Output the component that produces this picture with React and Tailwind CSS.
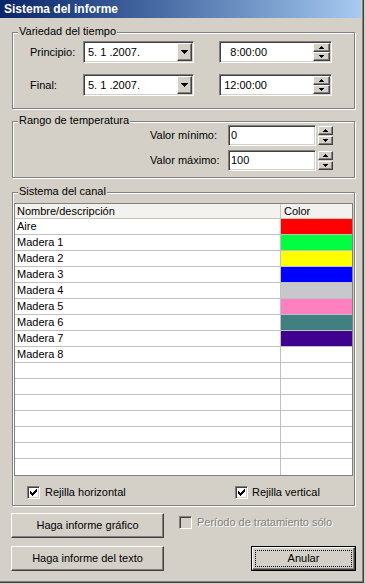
import React from 'react';

const raised =
  'border border-t-white border-l-white border-r-[#404040] border-b-[#404040] shadow-[inset_-1px_-1px_0_#808080,inset_1px_1px_0_#d4d0c8]';
const sunken =
  'border border-t-[#808080] border-l-[#808080] border-r-white border-b-white shadow-[inset_1px_1px_0_#404040,inset_-1px_-1px_0_#d4d0c8]';

const ArrowDown = () => (
  <svg width="7" height="4" shapeRendering="crispEdges">
    <rect x="0" y="0" width="7" height="1" fill="#000" />
    <rect x="1" y="1" width="5" height="1" fill="#000" />
    <rect x="2" y="2" width="3" height="1" fill="#000" />
    <rect x="3" y="3" width="1" height="1" fill="#000" />
  </svg>
);

const SmallArrow = ({ up }) => (
  <svg width="5" height="3" shapeRendering="crispEdges" className={up ? '' : 'rotate-180'}>
    <rect x="2" y="0" width="1" height="1" fill="#000" />
    <rect x="1" y="1" width="3" height="1" fill="#000" />
    <rect x="0" y="2" width="5" height="1" fill="#000" />
  </svg>
);

const Check = () => (
  <svg width="7" height="7" shapeRendering="crispEdges">
    <rect x="6" y="0" width="1" height="3" fill="#000" />
    <rect x="5" y="1" width="1" height="3" fill="#000" />
    <rect x="4" y="2" width="1" height="3" fill="#000" />
    <rect x="3" y="3" width="1" height="3" fill="#000" />
    <rect x="2" y="4" width="1" height="3" fill="#000" />
    <rect x="1" y="3" width="1" height="3" fill="#000" />
    <rect x="0" y="2" width="1" height="3" fill="#000" />
  </svg>
);

const Spinner = ({ className = '' }) => (
  <div className={`flex flex-col ${className}`}>
    <div className={`${raised} bg-[#d4d0c8] flex-1 flex items-center justify-center`}>
      <SmallArrow up />
    </div>
    <div className={`${raised} bg-[#d4d0c8] flex-1 flex items-center justify-center`}>
      <SmallArrow />
    </div>
  </div>
);

const Group = ({ title, className = '', children }) => (
  <div className={`relative ml-[12px] w-[343px] border border-[#808080] shadow-[1px_1px_0_#fff,inset_1px_1px_0_#fff] ${className}`}>
    <span className="absolute left-[5px] top-[-8px] bg-[#d4d0c8] px-px leading-[13px]">{title}</span>
    {children}
  </div>
);

const CheckBox = ({ checked, disabled }) => (
  <div className={`${sunken} w-[13px] h-[13px] flex items-center justify-center ${disabled ? 'bg-[#d4d0c8]' : 'bg-white'}`}>
    {checked && <Check />}
  </div>
);

const Button = ({ children }) => (
  <div className={`${raised} w-[153px] h-[25px] bg-[#d4d0c8] flex items-center justify-center`}>{children}</div>
);

const DateRow = ({ label, date, time }) => (
  <div className="flex items-center">
    <span className="w-[53px]">{label}</span>
    <div className={`${sunken} bg-white w-[111px] h-[22px] p-px flex items-center`}>
      <span className="flex-1 pl-[3px]">{date}</span>
      <div className={`${raised} bg-[#d4d0c8] w-[15px] h-full flex items-center justify-center`}>
        <ArrowDown />
      </div>
    </div>
    <div className={`${sunken} bg-white ml-[25px] w-[113px] h-[22px] p-px flex items-center`}>
      <span className="w-[46px] text-right">{time}</span>
      <Spinner className="ml-auto w-[17px] h-full" />
    </div>
  </div>
);

const ValueRow = ({ label, value }) => (
  <div className="flex items-center pl-[137px]">
    <span className="w-[78px]">{label}</span>
    <div className={`${sunken} bg-white w-[88px] h-[21px] flex items-center pl-[2px]`}>{value}</div>
    <Spinner className="ml-[2px] w-[15px] h-[19px] gap-px" />
  </div>
);

const channels = [
  ['Aire', '#ff0000'],
  ['Madera 1', '#00ff40'],
  ['Madera 2', '#ffff00'],
  ['Madera 3', '#0000ff'],
  ['Madera 4', '#c8c8cc'],
  ['Madera 5', '#ff80c0'],
  ['Madera 6', '#408080'],
  ['Madera 7', '#400090'],
  ['Madera 8', null],
  ...Array(7).fill(['', null]),
];

export default function App() {
  return (
    <div className="w-[366px] h-[584px] bg-[#d4d0c8] font-['Liberation_Sans',Arial,sans-serif] text-[11px] text-black leading-[13px] overflow-hidden">
      <div className="w-[364px] h-[583px] flex flex-col shadow-[inset_-1px_-1px_0_#404040,inset_-2px_-2px_0_#808080]">
        <div className="w-[361px] h-[18px] shrink-0 bg-linear-to-r from-[#0a246a] to-[#a6caf0] flex items-center pl-[4px]">
          <span className="text-white font-bold text-[12px]">Sistema del informe</span>
        </div>

        <Group title="Variedad del tiempo" className="mt-[14px] h-[77px] pt-[8px] pl-[17px]">
          <div className="flex flex-col gap-[11px]">
            <DateRow label="Principio:" date="5. 1 .2007." time="8:00:00" />
            <DateRow label="Final:" date="5. 1 .2007." time="12:00:00" />
          </div>
        </Group>

        <Group title="Rango de temperatura" className="mt-[12px] h-[57px] pt-[3px]">
          <div className="flex flex-col gap-[4px]">
            <ValueRow label="Valor mínimo:" value="0" />
            <ValueRow label="Valor máximo:" value="100" />
          </div>
        </Group>

        <Group title="Sistema del canal" className="mt-[14px] h-[314px] pt-[10px]">
          <div className="ml-px w-[339px] h-[273px] border border-[#808080] bg-white flex flex-col">
            <div className="h-[15px] flex bg-[#f3f2ee] border-b border-[#c8c6bc]">
              <div className="w-[266px] border-r border-[#c8c6bc] pl-[2px] flex items-center">Nombre/descripción</div>
              <div className="flex-1 pl-[3px] flex items-center">Color</div>
            </div>
            {channels.map(([name, color], i) => (
              <div key={i} className="h-[16px] flex border-b border-[#c0c0c0] last:border-b-0">
                <div className="w-[266px] border-r border-[#c0c0c0] pl-[2px] flex items-center">{name}</div>
                <div className="flex-1" style={color ? { background: color } : undefined} />
              </div>
            ))}
          </div>
          <div className="flex items-center mt-[10px] ml-[14px]">
            <div className="w-[208px] flex items-center">
              <CheckBox checked />
              <span className="ml-[5px]">Rejilla horizontal</span>
            </div>
            <CheckBox checked />
            <span className="ml-[4px]">Rejilla vertical</span>
          </div>
        </Group>

        <div className="flex mt-[7px]">
          <div className="ml-[11px] flex flex-col gap-[8px]">
            <Button>Haga informe gráfico</Button>
            <Button>Haga informe del texto</Button>
          </div>
          <div className="ml-[15px] w-[177px] flex flex-col">
            <div className="flex items-center mt-[3px]">
              <CheckBox disabled />
              <span className="ml-[5px] text-[#808080] [text-shadow:1px_1px_0_#fff]">Período de tratamiento sólo</span>
            </div>
            <div className="mt-auto self-end w-[105px] h-[25px] border border-black bg-[#d4d0c8]">
              <div className={`${raised} h-full p-[2px] flex`}>
                <div className="flex-1 border border-dotted border-black flex items-center justify-center">Anular</div>
              </div>
            </div>
          </div>
        </div>
      </div>
    </div>
  );
}
